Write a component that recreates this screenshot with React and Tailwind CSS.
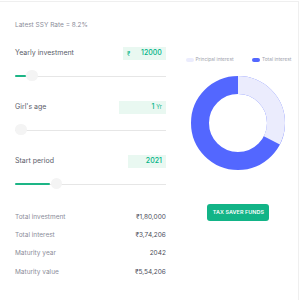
import React from 'react';

const blocks = [
  { label: 'Yearly investment', box: 'w-[43px]', prefix: '₹', value: '12000', fill: 11, thumb: 17 },
  { label: "Girl's age", box: 'w-[47px]', prefix: null, value: '1', unit: 'Yr', fill: 0, thumb: 6 },
  { label: 'Start period', box: 'w-[38px]', prefix: null, value: '2021', fill: 35, thumb: 41.5 },
];

const summary = [
  ['Total investment', '₹1,80,000'],
  ['Total interest', '₹3,74,206'],
  ['Maturity year', '2042'],
  ['Maturity value', '₹5,54,206'],
];

function Slider({ fill, thumb }) {
  return (
    <div className="relative h-[12px] mt-[9.5px]">
      <div className="absolute left-0 right-0 top-[6px] h-px bg-[#e6e6e6]" />
      <div className="absolute left-0 top-[5.5px] h-[1.6px] bg-[#1db586] rounded" style={{ width: fill }} />
      <div
        className="absolute top-0 w-[11.5px] h-[11.5px] rounded-full bg-[#f4f4f4]"
        style={{ left: thumb - 5.75 }}
      />
    </div>
  );
}

function Donut() {
  const r = 38;
  const c = 2 * Math.PI * r;
  const principal = 180000 / 554206;
  return (
    <svg width="94" height="94" viewBox="0 0 94 94">
      <circle cx="47" cy="47" r={r} fill="none" stroke="#5367ff" strokeWidth="18" />
      <circle
        cx="47"
        cy="47"
        r={r}
        fill="none"
        stroke="#ebecfd"
        strokeWidth="18"
        strokeDasharray={`${principal * c} ${c}`}
        transform="rotate(-90 47 47)"
      />
    </svg>
  );
}

export default function App() {
  return (
    <div className="w-[300px] h-[300px] bg-white overflow-hidden font-['Inter',sans-serif]">
      <div className="w-[299px] h-[300px] mt-px border-t border-r border-[#efefef] flex">
        {/* Left: inputs */}
        <div className="w-[152px] ml-[15px] pt-[19px]">
          <p className="text-[6.5px] leading-[9px] text-[#8a8c99]">Latest SSY Rate = 8.2%</p>
          <div className="mt-[17px]">
            {blocks.map((b, i) => (
              <div key={b.label} className={i > 0 ? 'mt-[19.5px]' : ''}>
                <div className="flex items-center justify-between h-[13px]">
                  <span className="text-[7px] text-[#5a5c69]">{b.label}</span>
                  <div className={`${b.box} h-[13px] bg-[#e9f8f1] flex items-center justify-between px-[4px] text-[#00b386]`}>
                    <span className="text-[6px]">{b.prefix}</span>
                    <span className="text-[7px] font-medium">
                      {b.value}
                      {b.unit && <span className="text-[5.5px] font-normal ml-[2px]">{b.unit}</span>}
                    </span>
                  </div>
                </div>
                <Slider fill={b.fill} thumb={b.thumb} />
              </div>
            ))}
          </div>
          <div className="mt-[19px]">
            {summary.map(([k, v]) => (
              <div key={k} className="flex items-center justify-between h-[18.3px]">
                <span className="text-[6.5px] text-[#8a8c99]">{k}</span>
                <span className="text-[6.5px] text-[#4c4e5a]">{v}</span>
              </div>
            ))}
          </div>
        </div>

        {/* Right: chart */}
        <div className="w-[120px] ml-[13px] pt-[55px] flex flex-col items-center">
          <div className="flex items-center h-[6px] text-[4.8px] text-[#a0a2ad]">
            <span className="w-[8px] h-[3.5px] rounded-full bg-[#ebecfd]" />
            <span className="ml-[2px]">Principal interest</span>
            <span className="ml-[18px] w-[8.5px] h-[3.5px] rounded-full bg-[#5367ff]" />
            <span className="ml-[2px]">Total interest</span>
          </div>
          <div className="mt-[13px]">
            <Donut />
          </div>
          <button className="mt-[33.5px] w-[62px] h-[17px] rounded-[3px] bg-[#12b487] text-white text-[5.4px] font-semibold tracking-[0.1px]">
            TAX SAVER FUNDS
          </button>
        </div>
      </div>
    </div>
  );
}
